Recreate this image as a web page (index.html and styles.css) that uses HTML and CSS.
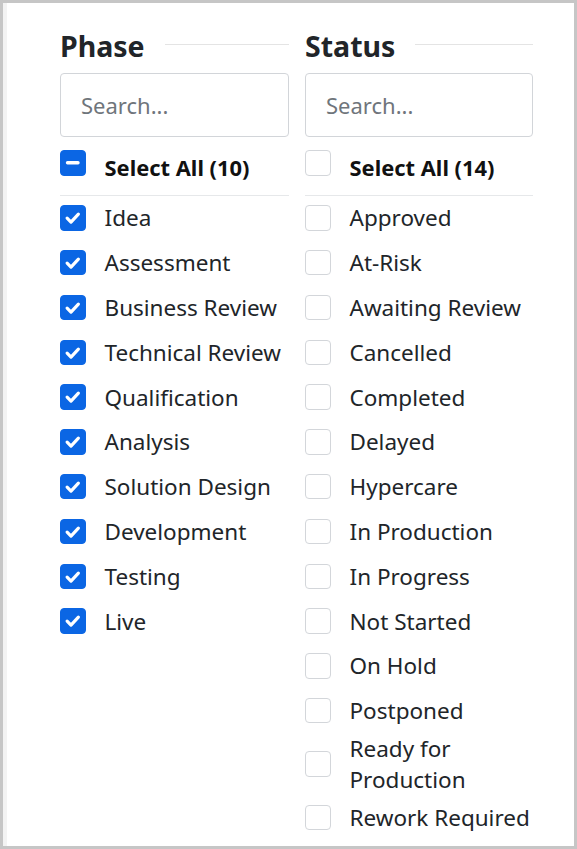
FILE: index.html
```html
<!DOCTYPE html>
<html lang="en">
<head>
<meta charset="utf-8">
<title>Filters</title>
<link rel="stylesheet" href="styles.css">
</head>
<body>
<div class="frame">
  <section class="col">
    <h2 class="heading">Phase</h2>
    <input class="search" type="text" placeholder="Search...">
    <div class="select-all">
      <span class="cb indeterminate"><svg viewBox="0 0 20 20"><path d="M5.5 10h9"/></svg></span>
      <span class="sa-label">Select All (10)</span>
    </div>
    <ul class="list">
      <li class="item"><span class="cb checked"><svg viewBox="0 0 20 20"><path d="M5.2 10.4l3.3 3.3 6.3-6.8"/></svg></span><span class="label">Idea</span></li>
      <li class="item"><span class="cb checked"><svg viewBox="0 0 20 20"><path d="M5.2 10.4l3.3 3.3 6.3-6.8"/></svg></span><span class="label">Assessment</span></li>
      <li class="item"><span class="cb checked"><svg viewBox="0 0 20 20"><path d="M5.2 10.4l3.3 3.3 6.3-6.8"/></svg></span><span class="label">Business Review</span></li>
      <li class="item"><span class="cb checked"><svg viewBox="0 0 20 20"><path d="M5.2 10.4l3.3 3.3 6.3-6.8"/></svg></span><span class="label">Technical Review</span></li>
      <li class="item"><span class="cb checked"><svg viewBox="0 0 20 20"><path d="M5.2 10.4l3.3 3.3 6.3-6.8"/></svg></span><span class="label">Qualification</span></li>
      <li class="item"><span class="cb checked"><svg viewBox="0 0 20 20"><path d="M5.2 10.4l3.3 3.3 6.3-6.8"/></svg></span><span class="label">Analysis</span></li>
      <li class="item"><span class="cb checked"><svg viewBox="0 0 20 20"><path d="M5.2 10.4l3.3 3.3 6.3-6.8"/></svg></span><span class="label">Solution Design</span></li>
      <li class="item"><span class="cb checked"><svg viewBox="0 0 20 20"><path d="M5.2 10.4l3.3 3.3 6.3-6.8"/></svg></span><span class="label">Development</span></li>
      <li class="item"><span class="cb checked"><svg viewBox="0 0 20 20"><path d="M5.2 10.4l3.3 3.3 6.3-6.8"/></svg></span><span class="label">Testing</span></li>
      <li class="item"><span class="cb checked"><svg viewBox="0 0 20 20"><path d="M5.2 10.4l3.3 3.3 6.3-6.8"/></svg></span><span class="label">Live</span></li>
    </ul>
  </section>
  <section class="col">
    <h2 class="heading">Status</h2>
    <input class="search" type="text" placeholder="Search...">
    <div class="select-all">
      <span class="cb"></span>
      <span class="sa-label">Select All (14)</span>
    </div>
    <ul class="list">
      <li class="item"><span class="cb"></span><span class="label">Approved</span></li>
      <li class="item"><span class="cb"></span><span class="label">At-Risk</span></li>
      <li class="item"><span class="cb"></span><span class="label">Awaiting Review</span></li>
      <li class="item"><span class="cb"></span><span class="label">Cancelled</span></li>
      <li class="item"><span class="cb"></span><span class="label">Completed</span></li>
      <li class="item"><span class="cb"></span><span class="label">Delayed</span></li>
      <li class="item"><span class="cb"></span><span class="label">Hypercare</span></li>
      <li class="item"><span class="cb"></span><span class="label">In Production</span></li>
      <li class="item"><span class="cb"></span><span class="label">In Progress</span></li>
      <li class="item"><span class="cb"></span><span class="label">Not Started</span></li>
      <li class="item"><span class="cb"></span><span class="label">On Hold</span></li>
      <li class="item"><span class="cb"></span><span class="label">Postponed</span></li>
      <li class="item"><span class="cb"></span><span class="label">Ready for Production</span></li>
      <li class="item"><span class="cb"></span><span class="label">Rework Required</span></li>
    </ul>
  </section>
</div>
</body>
</html>
```

FILE: styles.css
```css
html, body {
  margin: 0;
  padding: 0;
  background: #ffffff;
}

body {
  font-family: "Noto Sans", "Open Sans", sans-serif;
  color: #212529;
}

.frame {
  box-sizing: border-box;
  width: 577px;
  height: 849px;
  border: 3px solid #c6c6c6;
  box-shadow: inset 4px 0 0 #f3f3f3;
  padding: 26px 40px 0 57px;
  display: grid;
  grid-template-columns: 229px 228px;
  column-gap: 16px;
  align-items: start;
  overflow: hidden;
}

.col {
  display: flex;
  flex-direction: column;
  min-width: 0;
}

.heading {
  margin: 0;
  display: flex;
  align-items: center;
  font-size: 28.5px;
  font-weight: 700;
  line-height: 34px;
  color: #212529;
}

.heading::after {
  content: "";
  flex: 1;
  height: 1px;
  background: #e4e4e4;
  margin-left: 20px;
  margin-top: -3px;
}

.search {
  box-sizing: border-box;
  display: block;
  width: 100%;
  height: 64px;
  margin: 10px 0 0;
  padding: 0 20px;
  border: 1px solid #d2d5d9;
  border-radius: 4px;
  font-family: "Noto Sans", "Open Sans", sans-serif;
  font-size: 22px;
  color: #212529;
  background: #fff;
  outline: none;
}

.search::placeholder {
  color: #6f757b;
  opacity: 1;
}

.select-all {
  display: flex;
  align-items: flex-start;
  gap: 19px;
  margin-top: 13px;
  padding-bottom: 12px;
  border-bottom: 1px solid #e6e8ea;
}

.sa-label {
  font-size: 21.9px;
  font-weight: 700;
  line-height: 31px;
  margin-top: 1.5px;
  color: #111;
}

.list {
  list-style: none;
  margin: 0;
  padding: 0;
}

.item {
  display: flex;
  align-items: center;
  gap: 19px;
  min-height: 44.8px;
}

.label {
  font-size: 22.5px;
  line-height: 31px;
  color: #212529;
}

.cb {
  box-sizing: border-box;
  flex: none;
  width: 25.5px;
  height: 25.5px;
  border: 1px solid #d3d6da;
  border-radius: 4px;
  background: #fff;
  display: flex;
  align-items: center;
  justify-content: center;
}

.cb svg {
  width: 100%;
  height: 100%;
  fill: none;
  stroke: #ffffff;
  stroke-linecap: round;
  stroke-linejoin: round;
}

.cb.checked,
.cb.indeterminate {
  background: #0b66e4;
  border-color: #0b66e4;
}

.cb.checked svg {
  stroke-width: 2.7;
}

.cb.indeterminate svg {
  stroke-width: 2.8;
}
```
